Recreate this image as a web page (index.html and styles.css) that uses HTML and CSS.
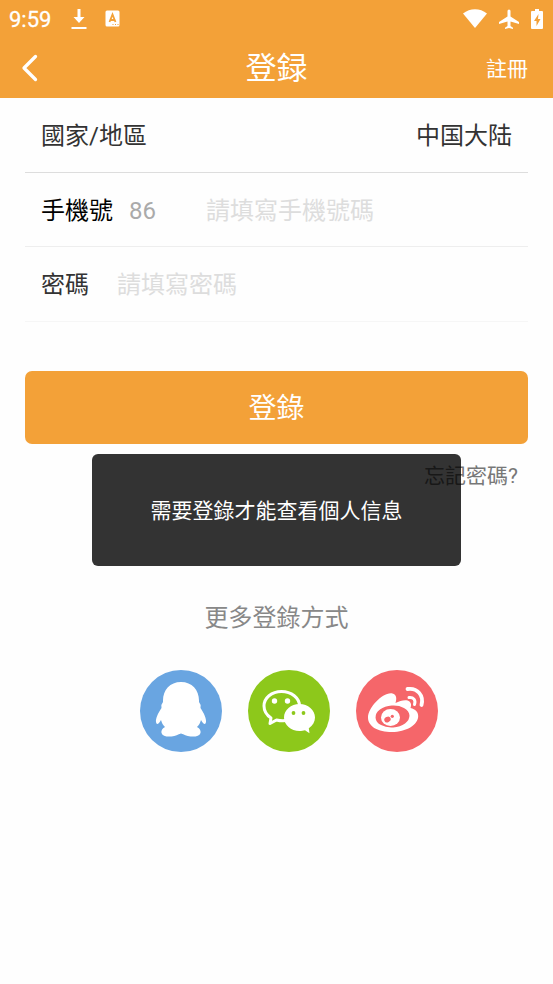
FILE: index.html
```html
<!DOCTYPE html>
<html lang="zh-Hant">
<head>
<meta charset="utf-8">
<meta name="viewport" content="width=device-width, initial-scale=1">
<title>登録</title>
<link rel="stylesheet" href="styles.css">
</head>
<body>
<header class="top">
  <div class="status">
    <span class="time">9:59</span>
    <svg class="status-download" width="16" height="22" viewBox="0 0 16 22" fill="#fff"><path d="M6.500 1h3v8h4L8 15 2.500 9h4zM.500 19h15v2H.500z"/></svg>
    <svg class="status-app" width="15" height="17" viewBox="0 0 15 17"><rect x=".5" y=".5" width="14" height="16" rx="1.500" fill="#fff"/><path d="M4.500 12 7.500 4.500 10.500 12M5.500 10h4" fill="none" stroke="#f3a138" stroke-width="1.800"/><path d="M7.500 14.500h1M10 14.500h1M12.500 14.500h1" stroke="#f3a138"/></svg>
    <div class="status-right">
      <svg width="24" height="19" viewBox="0 0 24 19" fill="#fff"><path d="M0 4.500C7-1.200 17-1.200 24 4.500L12 19z"/></svg>
      <svg width="20" height="20" viewBox="0 0 20 20" fill="#fff"><path d="M8.500 2a1.500 1.500 0 0 1 3 0v5.500L20 13v2l-8.500-2.500V17l2.500 1.700V20l-4-1-4 1v-1.300L8.500 17v-4.500L0 15v-2l8.500-5.500z"/></svg>
      <svg width="12" height="20" viewBox="0 0 12 20"><path d="M4 0h4v2h3a1 1 0 0 1 1 1v16a1 1 0 0 1-1 1H1a1 1 0 0 1-1-1V3a1 1 0 0 1 1-1h3z" fill="#fff"/><path d="M7.500 5 3 12h2.500v5L9.500 10H7z" fill="#f3a138"/></svg>
    </div>
  </div>
  <nav class="bar">
    <button class="back" type="button" aria-label="返回"><svg width="17" height="28" viewBox="0 0 17 28"><path d="M14.500 2.500 3 14l11.500 11.500" fill="none" stroke="#fff" stroke-width="3.300" stroke-linecap="round" stroke-linejoin="round"/></svg></button>
    <h1 class="title">登録</h1>
    <a class="register" href="#register">註冊</a>
  </nav>
</header>
<main class="content">
  <form>
    <button class="row country" type="button"><span>國家/地區</span><span>中国大陆</span></button>
    <div class="row phone">
      <label for="phone">手機號</label>
      <span class="code">86</span>
      <input id="phone" type="tel" placeholder="請填寫手機號碼">
    </div>
    <div class="row password">
      <label for="password">密碼</label>
      <input id="password" type="password" placeholder="請填寫密碼">
    </div>
    <button class="submit" type="button">登錄</button>
    <a class="forgot" href="#forgot">忘記密碼?</a>
  </form>
  <section class="more">
    <h2 class="more-title">更多登錄方式</h2>
    <div class="socials">
      <button class="social" type="button" aria-label="QQ">
        <svg viewBox="0 0 82 82"><circle cx="41" cy="41" r="41" fill="#69a5e1"/><path fill="#fff" d="M41 12C30 12 23 20 23 30.500V32q-2 2-1.500 6C18 43 15.500 49 16 52c.5 3 2.500 2.500 5-2 .8 3 2 5 4 7-3 1.500-4 4-3.500 6 1 3 5 4 10 3.500 4-.3 6.500-2 9.500-3 3 1 5.500 2.700 9.500 3 5 .5 9-.5 10-3.500.5-2-.5-4.500-3.500-6 2-2 3.200-4 4-7 2.500 4.500 4.500 5 5 2 .5-3-2-9-5.500-14q.5-4-1.500-6v-1.500C59 20 52 12 41 12z"/></svg>
      </button>
      <button class="social" type="button" aria-label="微信">
        <svg viewBox="0 0 82 82"><circle cx="41" cy="41" r="41" fill="#8dc81b"/><path d="M33.500 21.500C23.500 21.500 16 28 16 36c0 5 2.500 9 7 12l-1 5.500 6.500-3.500c12 3 23-3 23-14 0-8-8-14.500-18-14.500z" fill="none" stroke="#fff" stroke-width="3" stroke-linejoin="round"/><g fill="#fff"><circle cx="26.500" cy="31" r="2.700"/><circle cx="39.500" cy="31" r="2.700"/><path d="M51.500 34C43 34 36 40 36 47.500S43 61 51.500 61c2 0 4-.3 5.500-.8l4.500 3-.7-5c4-2.700 6.200-6.500 6.200-10.700C67 40 60 34 51.500 34z" /></g><circle cx="45.500" cy="43" r="1.900" fill="#8dc81b"/><circle cx="55.500" cy="43" r="1.900" fill="#8dc81b"/></svg>
      </button>
      <button class="social" type="button" aria-label="微博">
        <svg viewBox="0 0 82 82"><circle cx="41" cy="41" r="41" fill="#f5666a"/><path fill="#fff" d="M36.500 23.500c4 1 4.500 5 3 9.500 5-2.500 11-4 14-1.500 2 1.700 1.800 4 1 6.500 5 1.300 7.700 4 7.700 8C62.200 55 50 62 36 62 22 62 12 56.500 12 47.500 12 38 27 21.500 36.500 23.500z"/><ellipse cx="36.500" cy="46.500" rx="17" ry="11" fill="#f5666a" transform="rotate(-4 36.500 46.500)"/><ellipse cx="34.500" cy="47.500" rx="9.500" ry="8.500" fill="#fff"/><ellipse cx="31.500" cy="49.500" rx="3.300" ry="2.700" fill="#f5666a" transform="rotate(-25 31.500 49.500)"/><circle cx="36.300" cy="46.300" r="1.600" fill="#f5666a"/><g fill="none" stroke="#fff" stroke-linecap="round"><path d="M53 27.500c4.500-.5 7 2.500 5.500 7" stroke-width="3"/><path d="M51.500 19c10-1.500 16.500 6.500 14 16" stroke-width="3.800"/></g></svg>
      </button>
    </div>
  </section>
</main>
<div class="toast" role="status">需要登錄才能查看個人信息</div>
</body>
</html>
```
FILE: styles.css
```css
* {
  box-sizing: border-box;
}

body {
  margin: 0;
  min-height: 100vh;
  position: relative;
  background: #fefefe;
  color: #333;
  font: 24px/36px Roboto, "Noto Sans CJK SC", sans-serif;
}

button,
input {
  margin: 0;
  padding: 0;
  border: 0;
  background: none;
  color: inherit;
  font: inherit;
}

a {
  color: inherit;
  text-decoration: none;
}

svg {
  display: block;
}

.top {
  background: #f3a138;
  color: #fff;
}

.status {
  display: flex;
  align-items: center;
  height: 37px;
  padding: 0 10px 0 9px;
}

.time {
  padding-top: 2px;
  font-size: 22px;
  -webkit-text-stroke: 0.3px #fff;
}

.status-download {
  margin-left: 20px;
}

.status-app {
  margin-left: 18px;
}

.status-right {
  display: flex;
  align-items: center;
  gap: 12px;
  margin-left: auto;
}

.bar {
  display: grid;
  grid-template-columns: 1fr auto 1fr;
  align-items: center;
  height: 61px;
  padding: 0 25px 0 21px;
}

.bar {
  padding-left: 25px;
}

.back {
  justify-self: start;
  margin-left: -4px;
}

.title {
  margin: 0;
  padding-top: 2px;
  font-size: 31px;
  font-weight: 400;
}

.register {
  justify-self: end;
  padding-top: 2px;
  font-size: 21px;
}

.content {
  padding: 0 25px;
}

.row {
  display: flex;
  align-items: center;
  width: 100%;
  height: 75px;
  padding: 2px 16px 0;
  border-bottom: 1px solid #eee;
}

.country {
  justify-content: space-between;
  border-color: #ddd;
}

.phone {
  height: 74px;
  color: #000;
}

.password {
  border-color: #f6f6f6;
}

.code {
  width: 77px;
  margin-left: 16px;
  color: #aaa;
}

.row input {
  flex: 1;
  min-width: 0;
  height: 36px;
  outline: 0;
}

.password input {
  margin-left: 28px;
}

.row input::placeholder {
  color: #ddd;
  opacity: 1;
}

.submit {
  display: block;
  width: 100%;
  height: 73px;
  margin-top: 49px;
  padding-top: 2px;
  border-radius: 7px;
  background: #f3a138;
  color: #fff;
  font-size: 28px;
}

.forgot {
  display: block;
  width: fit-content;
  margin: 14px 10px 0 auto;
  color: #777;
  font-size: 21px;
}

.more-title {
  margin: 106px 0 0;
  color: #888;
  font-size: 24px;
  font-weight: 400;
  text-align: center;
}

.socials {
  display: flex;
  justify-content: center;
  gap: 26px;
  margin-top: 34px;
  padding-left: 24px;
}

.social {
  width: 82px;
  height: 82px;
}

.toast {
  position: absolute;
  top: 454px;
  right: 0;
  left: 0;
  width: 66.67%;
  margin: 0 auto;
  padding: 39px 16px 37px;
  border-radius: 6px;
  background: rgba(0, 0, 0, 0.8);
  color: #fff;
  font-size: 21px;
  text-align: center;
}
```
